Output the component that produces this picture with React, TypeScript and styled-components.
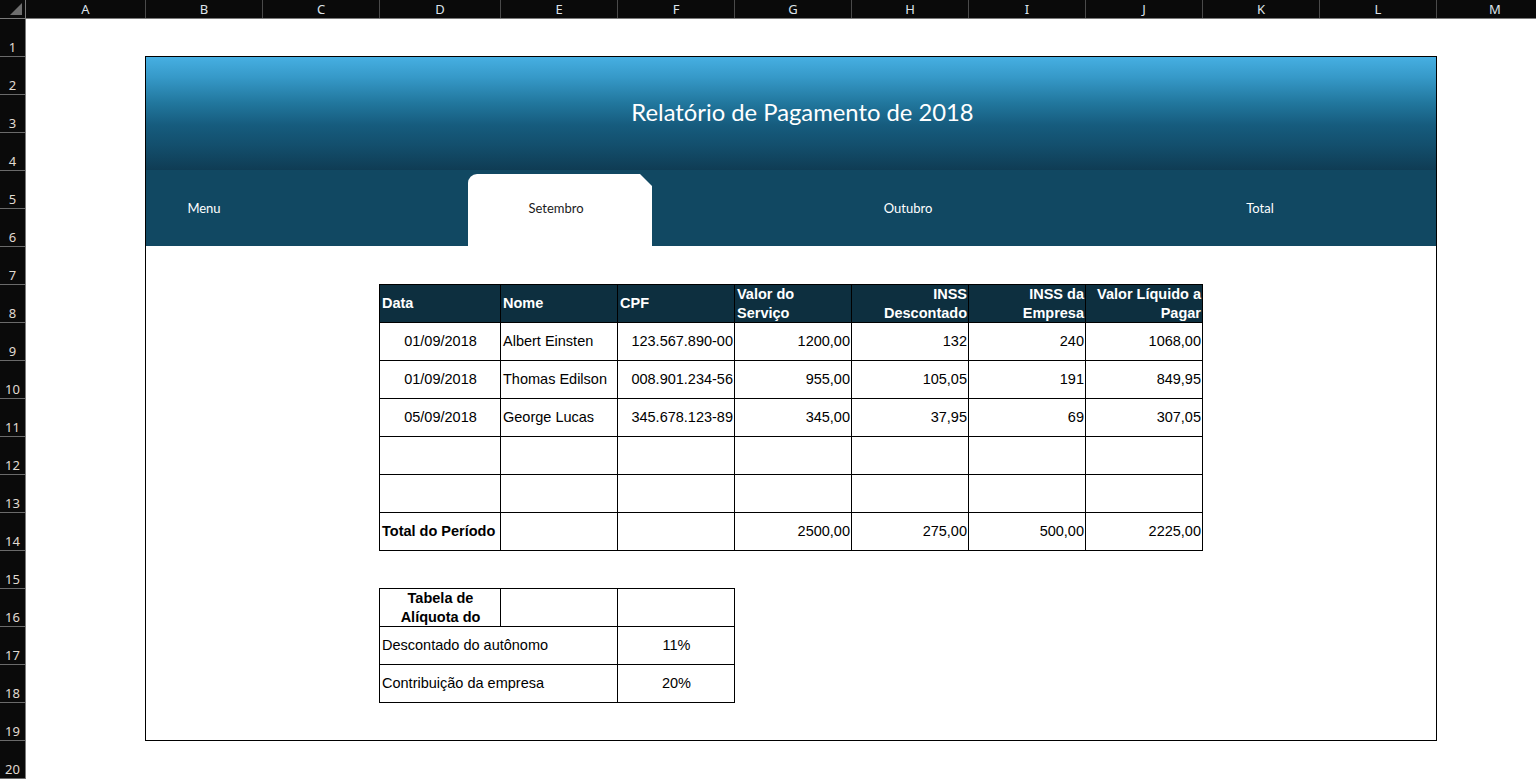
import React from "react";
import styled, { createGlobalStyle } from "styled-components";

const GlobalStyle = createGlobalStyle`
  html, body {
    margin: 0;
    padding: 0;
    background: #ffffff;
    overflow: hidden;
  }
  * {
    box-sizing: border-box;
  }
`;

const columns = [
  { label: "A", width: 120 },
  { label: "B", width: 117 },
  { label: "C", width: 117 },
  { label: "D", width: 121 },
  { label: "E", width: 117 },
  { label: "F", width: 117 },
  { label: "G", width: 117 },
  { label: "H", width: 117 },
  { label: "I", width: 117 },
  { label: "J", width: 117 },
  { label: "K", width: 117 },
  { label: "L", width: 117 },
  { label: "M", width: 117 },
];

const rows = Array.from({ length: 20 }, (_, i) => i + 1);

type Align = "left" | "center" | "right";

interface DataRow {
  data: string;
  nome: string;
  cpf: string;
  valor: string;
  inss: string;
  empresa: string;
  liquido: string;
}

const dataRows: DataRow[] = [
  {
    data: "01/09/2018",
    nome: "Albert Einsten",
    cpf: "123.567.890-00",
    valor: "1200,00",
    inss: "132",
    empresa: "240",
    liquido: "1068,00",
  },
  {
    data: "01/09/2018",
    nome: "Thomas Edilson",
    cpf: "008.901.234-56",
    valor: "955,00",
    inss: "105,05",
    empresa: "191",
    liquido: "849,95",
  },
  {
    data: "05/09/2018",
    nome: "George Lucas",
    cpf: "345.678.123-89",
    valor: "345,00",
    inss: "37,95",
    empresa: "69",
    liquido: "307,05",
  },
];

const headers: { text: React.ReactNode; align: Align }[] = [
  { text: "Data", align: "left" },
  { text: "Nome", align: "left" },
  { text: "CPF", align: "left" },
  { text: <>Valor do<br />Serviço</>, align: "left" },
  { text: <>INSS<br />Descontado</>, align: "right" },
  { text: <>INSS da<br />Empresa</>, align: "right" },
  { text: <>Valor Líquido a<br />Pagar</>, align: "right" },
];

const Window = styled.div`
  width: 1536px;
  height: 779px;
  overflow: hidden;
  display: grid;
  grid-template-columns: 26px 1fr;
  grid-template-rows: 19px 1fr;
  background: #ffffff;
`;

const Corner = styled.div`
  position: relative;
  background: #0a0a0a;
  border-right: 1px solid #7a7a7a;
  border-bottom: 1px solid #7a7a7a;

  &:after {
    content: "";
    position: absolute;
    right: 3px;
    bottom: 3px;
    width: 0;
    height: 0;
    border-left: 12px solid transparent;
    border-bottom: 12px solid #6e6e6e;
  }
`;

const ColumnBar = styled.div`
  display: flex;
  background: #0a0a0a;
  border-bottom: 1px solid #7a7a7a;
  overflow: hidden;
`;

const ColumnHead = styled.div<{ $width: number }>`
  flex: 0 0 ${(p) => p.$width}px;
  border-right: 1px solid #4a4a4a;
  display: flex;
  align-items: center;
  justify-content: center;
  color: #dde3ea;
  font-family: "Noto Sans", "Open Sans", sans-serif;
  font-size: 13px;
  line-height: 1;
`;

const RowBar = styled.div`
  display: flex;
  flex-direction: column;
  background: #0a0a0a;
  border-right: 1px solid #7a7a7a;
`;

const RowHead = styled.div`
  flex: 0 0 38px;
  border-bottom: 1px solid #6a6a6a;
  display: flex;
  align-items: flex-end;
  justify-content: center;
  padding-bottom: 2px;
  color: #e0dbd2;
  font-family: "Noto Sans", "Open Sans", sans-serif;
  font-size: 13px;
  line-height: 1;
`;

const Sheet = styled.div`
  padding: 37px 0 0 119px;
  overflow: hidden;
`;

const Panel = styled.section`
  width: 1292px;
  height: 685px;
  border: 1px solid #000000;
  display: flex;
  flex-direction: column;
`;

const Banner = styled.header`
  flex: 0 0 113px;
  display: flex;
  align-items: center;
  justify-content: center;
  background: linear-gradient(
    180deg,
    #46afe2 0%,
    #3699c8 18%,
    #22789f 40%,
    #165c7e 60%,
    #134f6d 78%,
    #0f3c54 100%
  );
  color: #ffffff;
  font-family: Lato, "Open Sans", sans-serif;
  font-size: 23.8px;
  padding: 0 0 4px 23px;
`;

const Nav = styled.nav`
  flex: 0 0 76px;
  display: grid;
  grid-template-columns: 116px 206px 184px 512px 192px 1fr;
  background: #114862;
`;

const NavItem = styled.div<{ $active?: boolean }>`
  display: flex;
  align-items: center;
  justify-content: center;
  font-family: Lato, "Open Sans", sans-serif;
  font-size: 13px;
  color: ${(p) => (p.$active ? "#1b1b1b" : "#ffffff")};
  background: ${(p) => (p.$active ? "#ffffff" : "transparent")};
  ${(p) =>
    p.$active &&
    `
    margin-top: 4px;
    padding: 0 8px 4px 0;
    border-top-left-radius: 9px;
    clip-path: polygon(0 0, calc(100% - 12px) 0, 100% 12px, 100% 100%, 0 100%);
  `}
`;

const Body = styled.div`
  flex: 1;
  display: flex;
  flex-direction: column;
  gap: 37px;
  padding: 38px 0 0 233px;
`;

const Grid = styled.div<{ $cols: string }>`
  display: grid;
  grid-template-columns: ${(p) => p.$cols};
  grid-auto-rows: 38px;
  border-top: 1px solid #000000;
  border-left: 1px solid #000000;
  width: max-content;
`;

const Cell = styled.div<{
  $align?: Align;
  $bold?: boolean;
  $head?: boolean;
  $span?: number;
}>`
  grid-column: span ${(p) => p.$span ?? 1};
  border-right: 1px solid #000000;
  border-bottom: 1px solid #000000;
  background: ${(p) => (p.$head ? "#0d2f3f" : "#ffffff")};
  color: ${(p) => (p.$head ? "#ffffff" : "#000000")};
  font-family: "Liberation Sans", Arial, sans-serif;
  font-size: 14.5px;
  font-weight: ${(p) => (p.$bold || p.$head ? 700 : 400)};
  line-height: 19px;
  text-align: ${(p) => p.$align ?? "left"};
  display: flex;
  flex-direction: column;
  justify-content: center;
  padding: 0 1px 0 2px;
  overflow: hidden;
  white-space: nowrap;
`;

const Wrap = styled.span`
  white-space: normal;
  display: block;
`;

const mainCols = "121px repeat(6, 117px)";
const rateCols = "121px 117px 117px";

export default function App() {
  return (
    <>
      <GlobalStyle />
      <Window>
        <Corner />
        <ColumnBar>
          {columns.map((c) => (
            <ColumnHead key={c.label} $width={c.width}>
              {c.label}
            </ColumnHead>
          ))}
        </ColumnBar>
        <RowBar>
          {rows.map((r) => (
            <RowHead key={r}>{r}</RowHead>
          ))}
        </RowBar>
        <Sheet>
          <Panel>
            <Banner>Relatório de Pagamento de 2018</Banner>
            <Nav>
              <NavItem>Menu</NavItem>
              <div />
              <NavItem $active>Setembro</NavItem>
              <NavItem>Outubro</NavItem>
              <NavItem>Total</NavItem>
            </Nav>
            <Body>
              <Grid $cols={mainCols}>
                {headers.map((h, i) => (
                  <Cell key={i} $head $align={h.align}>
                    <span>{h.text}</span>
                  </Cell>
                ))}
                {dataRows.map((r, i) => (
                  <React.Fragment key={i}>
                    <Cell $align="center">{r.data}</Cell>
                    <Cell>{r.nome}</Cell>
                    <Cell $align="right">{r.cpf}</Cell>
                    <Cell $align="right">{r.valor}</Cell>
                    <Cell $align="right">{r.inss}</Cell>
                    <Cell $align="right">{r.empresa}</Cell>
                    <Cell $align="right">{r.liquido}</Cell>
                  </React.Fragment>
                ))}
                {[0, 1].map((r) =>
                  Array.from({ length: 7 }, (_, c) => <Cell key={`e${r}-${c}`} />)
                )}
                <Cell $bold>Total do Período</Cell>
                <Cell />
                <Cell />
                <Cell $align="right">2500,00</Cell>
                <Cell $align="right">275,00</Cell>
                <Cell $align="right">500,00</Cell>
                <Cell $align="right">2225,00</Cell>
              </Grid>

              <Grid $cols={rateCols}>
                <Cell $bold $align="center">
                  <Wrap>Tabela de Alíquota do</Wrap>
                </Cell>
                <Cell />
                <Cell />
                <Cell $span={2}>Descontado do autônomo</Cell>
                <Cell $align="center">11%</Cell>
                <Cell $span={2}>Contribuição da empresa</Cell>
                <Cell $align="center">20%</Cell>
              </Grid>
            </Body>
          </Panel>
        </Sheet>
      </Window>
    </>
  );
}
